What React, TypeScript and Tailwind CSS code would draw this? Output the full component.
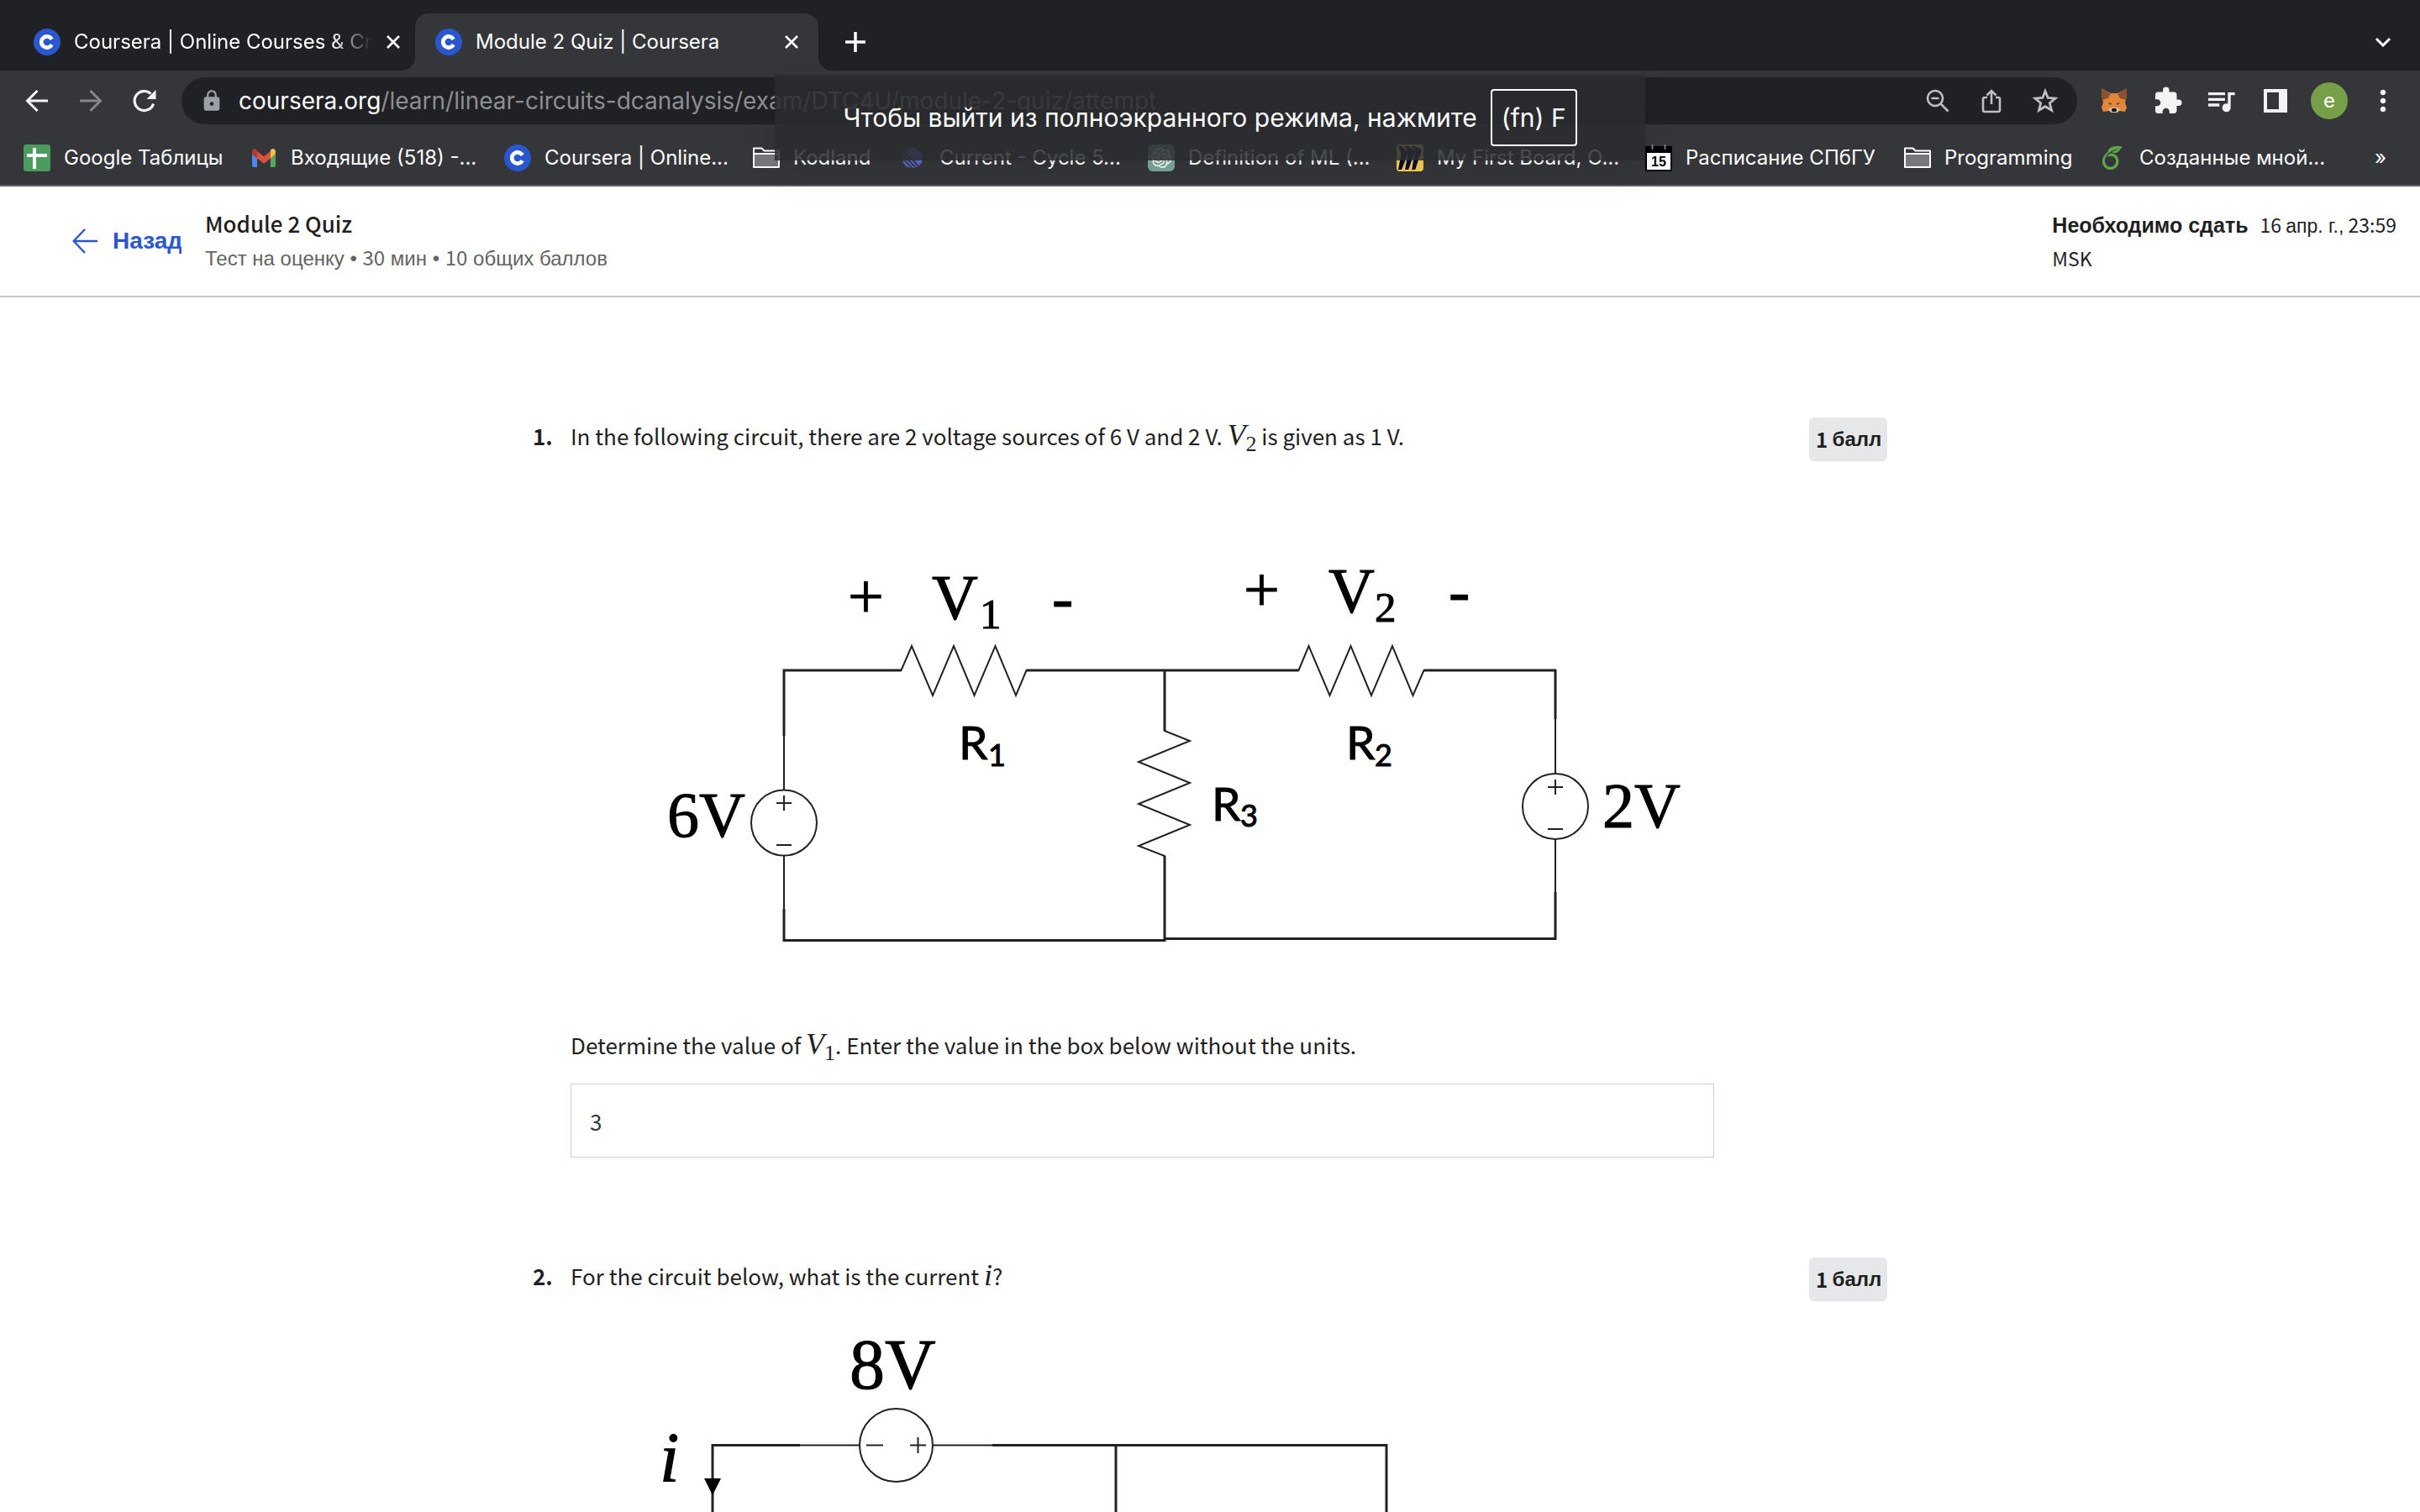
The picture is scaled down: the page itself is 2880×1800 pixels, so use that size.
import React from "react";
import { MdExtension, MdLock, MdMoreVert, MdQueueMusic } from "react-icons/md";
import { SiLinear, SiMiro, SiOpenai, SiOverleaf } from "react-icons/si";

const latin = "font-['Noto_Sans_CJK_SC',sans-serif]";
const cyr = "font-['Liberation_Sans',sans-serif]";

function CourseraIcon() {
  return (
    <svg viewBox="0 0 32 32" className="size-8 shrink-0" aria-hidden="true">
      <circle cx="16" cy="16" r="16" fill="#2a57cf" />
      <path d="M21.6 12.8A6.6 6.6 0 1 0 21.6 19.2" fill="none" stroke="#fff" strokeWidth="4.6" />
    </svg>
  );
}

function CloseIcon() {
  return (
    <svg viewBox="0 0 18 18" className="size-[18px]" aria-hidden="true">
      <path d="M2 2l14 14M16 2L2 16" stroke="currentColor" strokeWidth="2.600" />
    </svg>
  );
}

function FolderIcon() {
  return (
    <svg viewBox="0 0 32 32" className="size-8 shrink-0" aria-hidden="true">
      <path d="M1 27V4.500h9.500l3 3H31V27z" fill="none" stroke="#fff" strokeWidth="2" strokeLinejoin="round" />
      <path d="M2 12h28v14H2z" fill="#77787b" />
      <path d="M1 11h30" stroke="#fff" strokeWidth="2" />
    </svg>
  );
}

function SheetsIcon() {
  return (
    <svg viewBox="0 0 32 32" className="size-8 shrink-0" aria-hidden="true">
      <rect width="32" height="32" rx="3" fill="#4a9d5f" />
      <path d="M13 4v25M4 13h24" stroke="#fff" strokeWidth="4" />
    </svg>
  );
}

function GmailIcon() {
  return (
    <svg viewBox="0 0 32 32" className="size-8 shrink-0" aria-hidden="true">
      <path d="M2 11l6 5v11H4a2 2 0 0 1-2-2z" fill="#5085ed" />
      <path d="M30 11l-6 5v11h4a2 2 0 0 0 2-2z" fill="#58a55c" />
      <path d="M8 8l8 6.300 8-6.300v8.500l-8 6.200-8-6.200z" fill="#d85140" />
      <path d="M2 11V8.500C2 5.500 5.200 4.200 7 5.700l1 .8v10z" fill="#b5362b" />
      <path d="M30 11V8.500c0-3-3.200-4.300-5-2.800l-1 .8v10z" fill="#f1bf42" />
    </svg>
  );
}

function CalendarIcon() {
  return (
    <svg viewBox="0 0 32 32" className="size-8 shrink-0" aria-hidden="true">
      <path d="M0 2h32v30H0z" fill="#000" />
      <path d="M2 10h28v20H2z" fill="#fff" />
      <path d="M8.500 0v6M23.500 0v6" stroke="#77787b" strokeWidth="2" />
      <text x="16" y="26" textAnchor="middle" fontSize="16" fontWeight="700" fontFamily="Liberation Sans" fill="#000">
        15
      </text>
    </svg>
  );
}

function FoxIcon() {
  return (
    <svg viewBox="0 0 32 30" className="h-[30px] w-8" aria-hidden="true">
      <path d="M2 1l10 5h8l10-5 1 8-2 8 2 6-2 5-7-1-4 2h-4l-4-2-7 1-2-5 2-6-2-8z" fill="#e2873a" />
      <path d="M1 0l11 7-3 5-7 2-1-5z" fill="#8b5230" />
      <path d="M31 0L20 7l3 5 7 2 1-5z" fill="#8b5230" />
      <path d="M9 25l4-2h6l4 2-3 4h-8z" fill="#d0bfae" />
      <path d="M9 17l4 1-1 2zM23 17l-4 1 1 2z" fill="#2f3a52" />
      <path d="M13.500 24h5l.5 3-1 1h-4l-1-1z" fill="#161616" />
    </svg>
  );
}

type TabProps = { title: string; active?: boolean };

function Tab({ title, active }: TabProps) {
  return (
    <div
      className={
        active
          ? "relative flex h-[68px] w-[480px] items-center rounded-t-2xl bg-[#35363a] pr-[23px] pl-6"
          : "flex h-[68px] w-[454px] items-center pr-[22px]"
      }
    >
      {active && (
        <>
          <span className="absolute bottom-0 -left-4 size-4 bg-[radial-gradient(circle_at_0_0,#202124_16px,#35363a_16px)]" />
          <span className="absolute -right-4 bottom-0 size-4 bg-[radial-gradient(circle_at_100%_0,#202124_16px,#35363a_16px)]" />
        </>
      )}
      <CourseraIcon />
      <button
        type="button"
        role="tab"
        aria-selected={!!active}
        className={
          active
            ? "mr-4 ml-4 flex-1 text-left whitespace-nowrap"
            : "mr-4 ml-4 flex-1 mask-r-from-86% mask-r-to-100% text-left whitespace-nowrap"
        }
      >
        {title}
      </button>
      <button type="button" aria-label="Закрыть вкладку" className="text-white">
        <CloseIcon />
      </button>
    </div>
  );
}

type BookmarkProps = { icon: React.ReactNode; label: string; width: string };

function Bookmark({ icon, label, width }: BookmarkProps) {
  return (
    <a href="#" className="flex shrink-0 items-center gap-4 whitespace-nowrap">
      {icon}
      <span className={width}>{label}</span>
    </a>
  );
}

const bookmarks: BookmarkProps[] = [
  { icon: <SheetsIcon />, label: "Google Таблицы", width: "w-[188px]" },
  { icon: <GmailIcon />, label: "Входящие (518) -...", width: "w-[220px]" },
  { icon: <CourseraIcon />, label: "Coursera | Online...", width: "w-[214px]" },
  { icon: <FolderIcon />, label: "Kodland", width: "w-[92px]" },
  { icon: <SiLinear className="mx-1 size-6 shrink-0 text-[#5e6ad2]" />, label: "Current - Cycle 5...", width: "w-[214px]" },
  {
    icon: (
      <span className="flex size-8 shrink-0 items-center justify-center rounded-md bg-[#7ba899]">
        <SiOpenai className="size-6 text-white" />
      </span>
    ),
    label: "Definition of ML (...",
    width: "w-[214px]",
  },
  {
    icon: (
      <span className="flex size-8 shrink-0 items-center justify-center rounded-sm bg-[#f7d04f]">
        <SiMiro className="size-7 text-[#0b0838]" />
      </span>
    ),
    label: "My First Board, O...",
    width: "w-[214px]",
  },
  { icon: <CalendarIcon />, label: "Расписание СПбГУ", width: "w-[226px]" },
  { icon: <FolderIcon />, label: "Programming", width: "w-[150px]" },
  { icon: <SiOverleaf className="size-8 shrink-0 p-[2px] text-[#5fa649]" />, label: "Созданные мной...", width: "w-[220px]" },
];

function BrowserChrome() {
  return (
    <header className="relative shrink-0 border-b-2 border-[#5f6064] bg-[#35363a] font-['Inter',sans-serif] text-white">
      <div role="tablist" className="flex h-[84px] items-end bg-[#202124] pl-10 text-2xl">
        <Tab title="Coursera | Online Courses & Cr" />
        <Tab title="Module 2 Quiz | Coursera" active />
        <button type="button" aria-label="Новая вкладка" className="ml-8 flex h-[68px] items-center">
          <svg viewBox="0 0 24 24" className="size-6" aria-hidden="true">
            <path d="M12 0v24M0 12h24" stroke="#fff" strokeWidth="3.500" />
          </svg>
        </button>
        <button type="button" aria-label="Поиск вкладок" className="mr-[34px] ml-auto flex h-[68px] items-center">
          <svg viewBox="0 0 20 12" className="h-3 w-5" aria-hidden="true">
            <path d="M2 2l8 8 8-8" fill="none" stroke="#fff" strokeWidth="3" />
          </svg>
        </button>
      </div>

      <div className="flex h-[72px] items-center pr-6 pl-[30px]">
        <button type="button" aria-label="Назад">
          <svg viewBox="0 0 28 28" className="size-7" fill="none" stroke="#f1f3f4" strokeWidth="3" aria-hidden="true">
            <path d="M27 14H3M14.500 2L2.500 14l12 12" />
          </svg>
        </button>
        <button type="button" aria-label="Вперёд" className="ml-9">
          <svg viewBox="0 0 28 28" className="size-7" fill="none" stroke="#86878a" strokeWidth="3" aria-hidden="true">
            <path d="M1 14h24M13.500 2l12 12-12 12" />
          </svg>
        </button>
        <button type="button" aria-label="Обновить" className="ml-9">
          <svg viewBox="0 0 28 28" className="size-7" aria-hidden="true">
            <path d="M24.600 17.500A11.500 11.500 0 1 1 21.500 5.600" fill="none" stroke="#f1f3f4" strokeWidth="3.200" />
            <path d="M27.500 1v11H16.500z" fill="#f1f3f4" />
          </svg>
        </button>
        <div className="ml-[30px] flex h-14 flex-1 items-center rounded-full bg-[#202124] pr-6 pl-[22px] text-[28px]">
          <MdLock className="size-7 text-[#9aa0a6]" />
          <span className="ml-[18px] flex-1 text-[#8d8e90]">
            <span className="text-white">coursera.org</span>
            /learn/linear-circuits-dcanalysis/exam/DTC4U/module-2-quiz/attempt
          </span>
          <span className="flex items-center gap-9">
            <button type="button" aria-label="Масштаб">
              <svg viewBox="0 0 28 28" className="size-7" fill="none" stroke="#bdbfc1" strokeWidth="2.600" aria-hidden="true">
                <circle cx="11" cy="11" r="9" />
                <path d="M6.500 11h9M17.500 17.500l9 9" />
              </svg>
            </button>
            <button type="button" aria-label="Поделиться">
              <svg viewBox="0 0 28 30" className="h-[30px] w-7" fill="none" stroke="#bdbfc1" strokeWidth="2.600" aria-hidden="true">
                <path d="M9 11H6a2 2 0 0 0-2 2v13a2 2 0 0 0 2 2h16a2 2 0 0 0 2-2V13a2 2 0 0 0-2-2h-3M14 19V3M8.500 8.500L14 3l5.500 5.500" />
              </svg>
            </button>
            <button type="button" aria-label="В закладки">
              <svg viewBox="0 0 28 28" className="size-7 overflow-visible" fill="none" stroke="#bdbfc1" strokeWidth="2.800" aria-hidden="true">
                <path d="M14 2.500l3.200 8 8.800.7-6.700 5.600 2.200 8.500L14 20.700l-7.500 4.600 2.200-8.500L2 11.200l8.800-.7z" />
              </svg>
            </button>
          </span>
        </div>
        <div className="ml-7 flex items-center">
          <button type="button" aria-label="MetaMask">
            <FoxIcon />
          </button>
          <button type="button" aria-label="Расширения" className="ml-[30px]">
            <MdExtension className="size-9 text-[#f1f3f4]" />
          </button>
          <button type="button" aria-label="Управление медиа" className="ml-[25px]">
            <MdQueueMusic className="size-10 text-[#f1f3f4]" />
          </button>
          <button type="button" aria-label="Боковая панель" className="ml-[31px]">
            <svg viewBox="0 0 28 28" className="size-7" aria-hidden="true">
              <path d="M0 0h28v28H0zM4 4v20h14V4z" fill="#f1f3f4" fillRule="evenodd" />
            </svg>
          </button>
          <button type="button" aria-label="Профиль" className="ml-7 size-11 rounded-full bg-[#769f47] text-2xl leading-none">
            e
          </button>
          <button type="button" aria-label="Меню" className="ml-[22px]">
            <MdMoreVert className="size-10 text-[#f1f3f4]" />
          </button>
        </div>
      </div>

      <nav aria-label="Закладки" className="flex h-16 items-center gap-[34px] pr-10 pl-7 text-2xl">
        {bookmarks.map((b) => (
          <Bookmark key={b.label} {...b} />
        ))}
        <button type="button" aria-label="Другие закладки" className="ml-auto">
          »
        </button>
      </nav>

      <div
        role="status"
        className="absolute top-[89px] left-1/2 flex h-[102px] w-[1036px] -translate-x-1/2 items-center justify-center gap-4 bg-[#2a2b2f]/85 text-[30px] whitespace-nowrap shadow-[0_16px_40px_rgba(0,0,0,0.08)]"
      >
        <span>Чтобы выйти из полноэкранного режима, нажмите</span>
        <kbd className="flex h-[68px] items-center rounded-sm border-2 border-white px-[11px] font-['Inter',sans-serif]">(fn) F</kbd>
      </div>
    </header>
  );
}

function QuizHeader() {
  return (
    <div className="flex h-[132px] shrink-0 items-center border-b-2 border-[#c8c8c8] bg-white text-[#1f1f1f]">
      <a href="#" className={`${cyr} ml-[86px] flex w-[130px] items-center gap-[18px] overflow-hidden text-[28px] font-bold text-[#2a57cf]`}>
        <svg viewBox="0 0 30 30" className="size-[30px] shrink-0" fill="none" stroke="currentColor" strokeWidth="2.400" aria-hidden="true">
          <path d="M30 15H2M15 1L1.700 15 15 29" />
        </svg>
        Назад
      </a>
      <div className="ml-7 flex flex-col">
        <h1 className={`${latin} text-[26px] leading-10 font-medium`}>Module 2 Quiz</h1>
        <p className={`${cyr} text-2xl leading-10 text-[#636363]`}>
          Тест на оценку • <span className={latin}>30</span> мин • <span className={latin}>10</span> общих баллов
        </p>
      </div>
      <p className={`${latin} mr-7 ml-auto text-[23px] leading-[38px]`}>
        <span className={`${cyr} mr-[14px] text-[25px] font-bold`}>Необходимо сдать</span>
        16 <span className={cyr}>апр. г.,</span> 23:59
        <br />
        MSK
      </p>
    </div>
  );
}

function MathVar({ name, sub }: { name: string; sub?: string }) {
  return (
    <span className="font-['Liberation_Serif',serif]">
      <i className="text-[36px] leading-none">{name}</i>
      {sub && <sub className="text-[26px] leading-none">{sub}</sub>}
    </span>
  );
}

function Points() {
  return (
    <span className={`${cyr} flex h-[52px] items-center rounded-md bg-[#e5e7e8] px-2 text-2xl font-bold whitespace-pre`}>
      <span className={latin}>1 </span>балл
    </span>
  );
}

type QuestionProps = { number: number; prompt: React.ReactNode; children: React.ReactNode };

function Question({ number, prompt, children }: QuestionProps) {
  return (
    <section className="grid grid-cols-[45px_1fr_93px] items-start">
      <span className={`${latin} text-[26px] leading-[44px] font-bold`}>{number}.</span>
      <div className="mr-[113px]">
        <p className={`${latin} h-11 text-[26px] leading-[44px]`}>{prompt}</p>
        {children}
      </div>
      <Points />
    </section>
  );
}

function TwoSourceCircuit() {
  return (
    <svg viewBox="679 640 1361 520" className="mt-[99px] block w-full" role="img" aria-label="Circuit with sources 6V and 2V and resistors R1, R2, R3">
      <g fill="none" stroke="#222" strokeWidth="2">
        <path d="M933 940V798H1072.500L1085 769l25 59 25-59 24.500 59 25-59 24.500 59 12.500-30H1545.500l12-29 25 59 25-59 24.500 59 25-59 24.500 59 13-30H1851V921" />
        <path d="M1386 798v72l30 12-61 25 61 25-61 25 61 25-61 25 31 12v100" />
        <path d="M933 1019v100.500h453M1386 1117.500h465V999" />
        <circle cx="933" cy="979.500" r="39" />
        <circle cx="1851" cy="960" r="39" />
        <path d="M924 956h18M933 947v18M924 1006h18M1842 937h18M1851 928v18M1842 987h18" />
      </g>
      <path
        d="M933 876V798H1072.500M1221.500 798H1545.500M1694.500 798H1851V856M1386 798v72M1386 1019v100.500H933V1082M1386 1117.500h465V1062"
        fill="none"
        stroke="#222"
        strokeWidth="3"
      />
      <g fontFamily="Liberation Serif" fontSize="76" stroke="#000" strokeWidth="1">
        <text x="794" y="996">6V</text>
        <text x="1009" y="735">+</text>
        <text x="1109" y="737">V</text>
        <text x="1166" y="748" fontSize="51">1</text>
        <text x="1252" y="737">-</text>
        <text x="1480" y="727">+</text>
        <text x="1581" y="729">V</text>
        <text x="1636" y="740" fontSize="51">2</text>
        <text x="1724" y="729">-</text>
        <text x="1907" y="985">2V</text>
      </g>
      <g fontFamily="Lato" fontSize="55" stroke="#000" strokeWidth="1">
        <text x="1141" y="904">R</text>
        <text x="1176" y="912" fontSize="36">1</text>
        <text x="1602" y="904">R</text>
        <text x="1636" y="912" fontSize="36">2</text>
        <text x="1442" y="977">R</text>
        <text x="1476" y="984" fontSize="36">3</text>
      </g>
    </svg>
  );
}

function CurrentCircuit() {
  return (
    <svg viewBox="679 1540 1361 500" className="block w-full" role="img" aria-label="Circuit with an 8V source and current i">
      <g fill="none" stroke="#222" strokeWidth="2">
        <path d="M952 1719.500h71M1110 1719.500h72" />
        <circle cx="1066.500" cy="1719.500" r="43.500" />
        <path d="M1031 1719.500h20M1083 1719.500h19M1092.500 1710v19" />
      </g>
      <g fill="none" stroke="#222" strokeWidth="3">
        <path d="M952 1719.500H848V2040M1181 1719.500H1650V2040M1328 1719.500V2040" />
      </g>
      <path d="M838 1759h20l-10 20z" fill="#000" />
      <g fontFamily="Liberation Serif" fontSize="84" stroke="#000" strokeWidth="1">
        <text x="1011" y="1652">8V</text>
        <text x="785" y="1763" fontStyle="italic">
          i
        </text>
      </g>
    </svg>
  );
}

export default function App() {
  return (
    <div className="flex h-screen flex-col overflow-hidden bg-white">
      <BrowserChrome />
      <QuizHeader />
      <main className="mx-auto w-full max-w-[1612px] flex-1 overflow-hidden pt-[143px] text-[#1f1f1f]">
        <Question
          number={1}
          prompt={
            <>
              In the following circuit, there are 2 voltage sources of 6 V and 2 V. <MathVar name="V" sub="2" /> is given as 1 V.
            </>
          }
        >
          <TwoSourceCircuit />
          <label htmlFor="answer-1" className={`${latin} mt-[62px] block h-11 text-[26px] leading-[44px]`}>
            Determine the value of <MathVar name="V" sub="1" />. Enter the value in the box below without the units.
          </label>
          <input
            id="answer-1"
            defaultValue="3"
            className={`${latin} mt-6 block h-[88px] w-full border border-[#c9cfd8] px-[22px] text-[26px] text-[#373a3c]`}
          />
        </Question>
        <div className="mt-[119px]">
          <Question
            number={2}
            prompt={
              <>
                For the circuit below, what is the current <MathVar name="i" />?
              </>
            }
          >
            <CurrentCircuit />
          </Question>
        </div>
      </main>
    </div>
  );
}
